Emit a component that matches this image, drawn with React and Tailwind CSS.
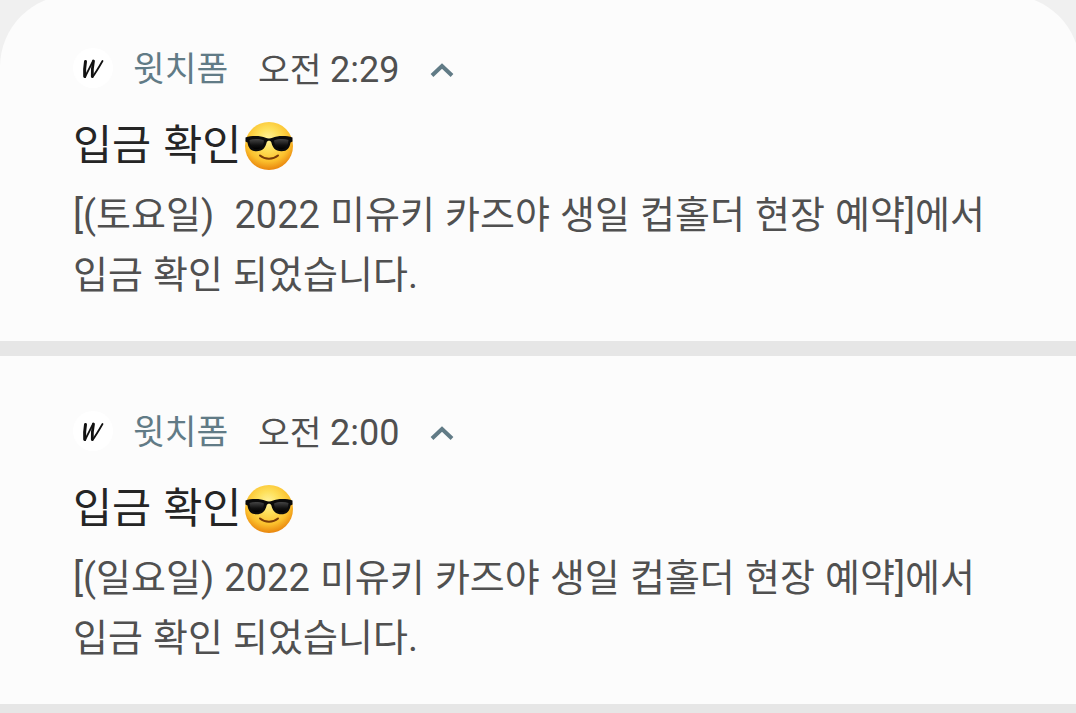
import React from "react";

const notifications = [
  // the first card bleeds slightly past the top and right edges
  { id: 1, time: "2:29", day: "(토요일)  2022", className: "h-[346px] -mt-[5px] -mr-1 pt-[53px] rounded-t-[72px]" },
  { id: 2, time: "2:00", day: "(일요일) 2022", className: "h-[348px] pt-[55px]" },
];

function WitchformLogo() {
  return (
    <svg viewBox="0 0 40 40" className="size-10" fill="none" stroke="#111" strokeLinecap="round" strokeLinejoin="round">
      <path d="M12.500 13.500c-.7 4-1.200 8-.8 15" strokeWidth="3" />
      <path d="M12 29 20 13" strokeWidth="1.700" />
      <path d="M20.500 13c-1 5-1.500 9-1.200 15.500" strokeWidth="2.800" />
      <path d="M19.500 29c3-4 6-9 10-16" strokeWidth="1.800" />
    </svg>
  );
}

function SunglassesFace() {
  return (
    <svg viewBox="0 0 50 50" className="mt-0.5 size-[50px] shrink-0">
      <defs>
        <radialGradient id="face" cx="48%" cy="36%" r="64%">
          <stop offset="0" stopColor="#fff3a0" />
          <stop offset="0.35" stopColor="#fee05a" />
          <stop offset="0.72" stopColor="#fbc02d" />
          <stop offset="1" stopColor="#e9850d" />
        </radialGradient>
        <linearGradient id="lens" x1="0" y1="0" x2="0" y2="1">
          <stop offset="0" stopColor="#444" />
          <stop offset="0.6" stopColor="#111" />
          <stop offset="1" stopColor="#000" />
        </linearGradient>
      </defs>
      <circle cx="25" cy="25" r="24" fill="url(#face)" />
      <path
        d="M1.500 16.500c6-2 15-2 20 .3 2 .8 5 .8 7 0 5-2.300 14-2.300 20-.3v4l-2 1c-.7 5-3 8.800-9 8.800-6.500 0-9-4-10.200-9-.6-2-4-2-4.600 0-1.200 5-3.700 9-10.200 9-6 0-8.300-3.800-9-8.800l-2-1z"
        fill="#0b0b0b"
      />
      <path d="M5.500 19c4-1.300 10-1.300 14.500.5-.5 5-3 8.700-7.500 8.700S6 25 5.500 19z" fill="url(#lens)" />
      <path d="M44.500 19c-4-1.300-10-1.300-14.500.5.5 5 3 8.700 7.500 8.700S44 25 44.500 19z" fill="url(#lens)" />
      <path d="M16 34.500c5 4.300 13 4.300 18 0" fill="none" stroke="#7a3c08" strokeWidth="2" strokeLinecap="round" />
    </svg>
  );
}

function Notification({ time, day, className }) {
  return (
    <article className={`shrink-0 px-[73px] bg-[#fcfcfc] text-[#505050] ${className}`}>
      <header className="flex items-center h-10 text-[34.500px] whitespace-nowrap">
        <span className="flex items-center justify-center size-10 rounded-full bg-white">
          <WitchformLogo />
        </span>
        <span className="mt-[3px] ml-5 w-[94px] text-[#617b86]">윗치폼</span>
        <span className="mt-[3px] ml-[31px]">
          오전 <span className="text-[36px]">{time}</span>
        </span>
        <svg viewBox="0 0 24 15" className="ml-[31px] mt-1 w-6 h-[15px]">
          <path d="M2 12.500 12 3l10 9.500" fill="none" stroke="#617b86" strokeWidth="4" />
        </svg>
      </header>
      <h2 className="flex items-center mt-8 h-[50px] text-[42.500px] text-[#252525]">
        <span className="w-[171px] pt-px whitespace-nowrap [word-spacing:1.500px]">입금 확인</span>
        <SunglassesFace />
      </h2>
      <p className="mt-[15px] text-[38px] leading-[60px] whitespace-pre [word-spacing:0.700px]">
        [{day} 미유키 카즈야 생일 컵홀더 현장 예약]에서
        <br />
        입금 확인 되었습니다.
      </p>
    </article>
  );
}

export default function App() {
  return (
    <main className="h-[713px] overflow-hidden bg-[#f0f0f0]">
      <div className="flex flex-col font-['Roboto','Noto_Sans_CJK_KR',sans-serif]">
        {notifications.map((item) => (
          <React.Fragment key={item.id}>
            <Notification time={item.time} day={item.day} className={item.className} />
            <div className="h-[15px] shrink-0 bg-[#e6e6e6]" />
          </React.Fragment>
        ))}
      </div>
    </main>
  );
}
